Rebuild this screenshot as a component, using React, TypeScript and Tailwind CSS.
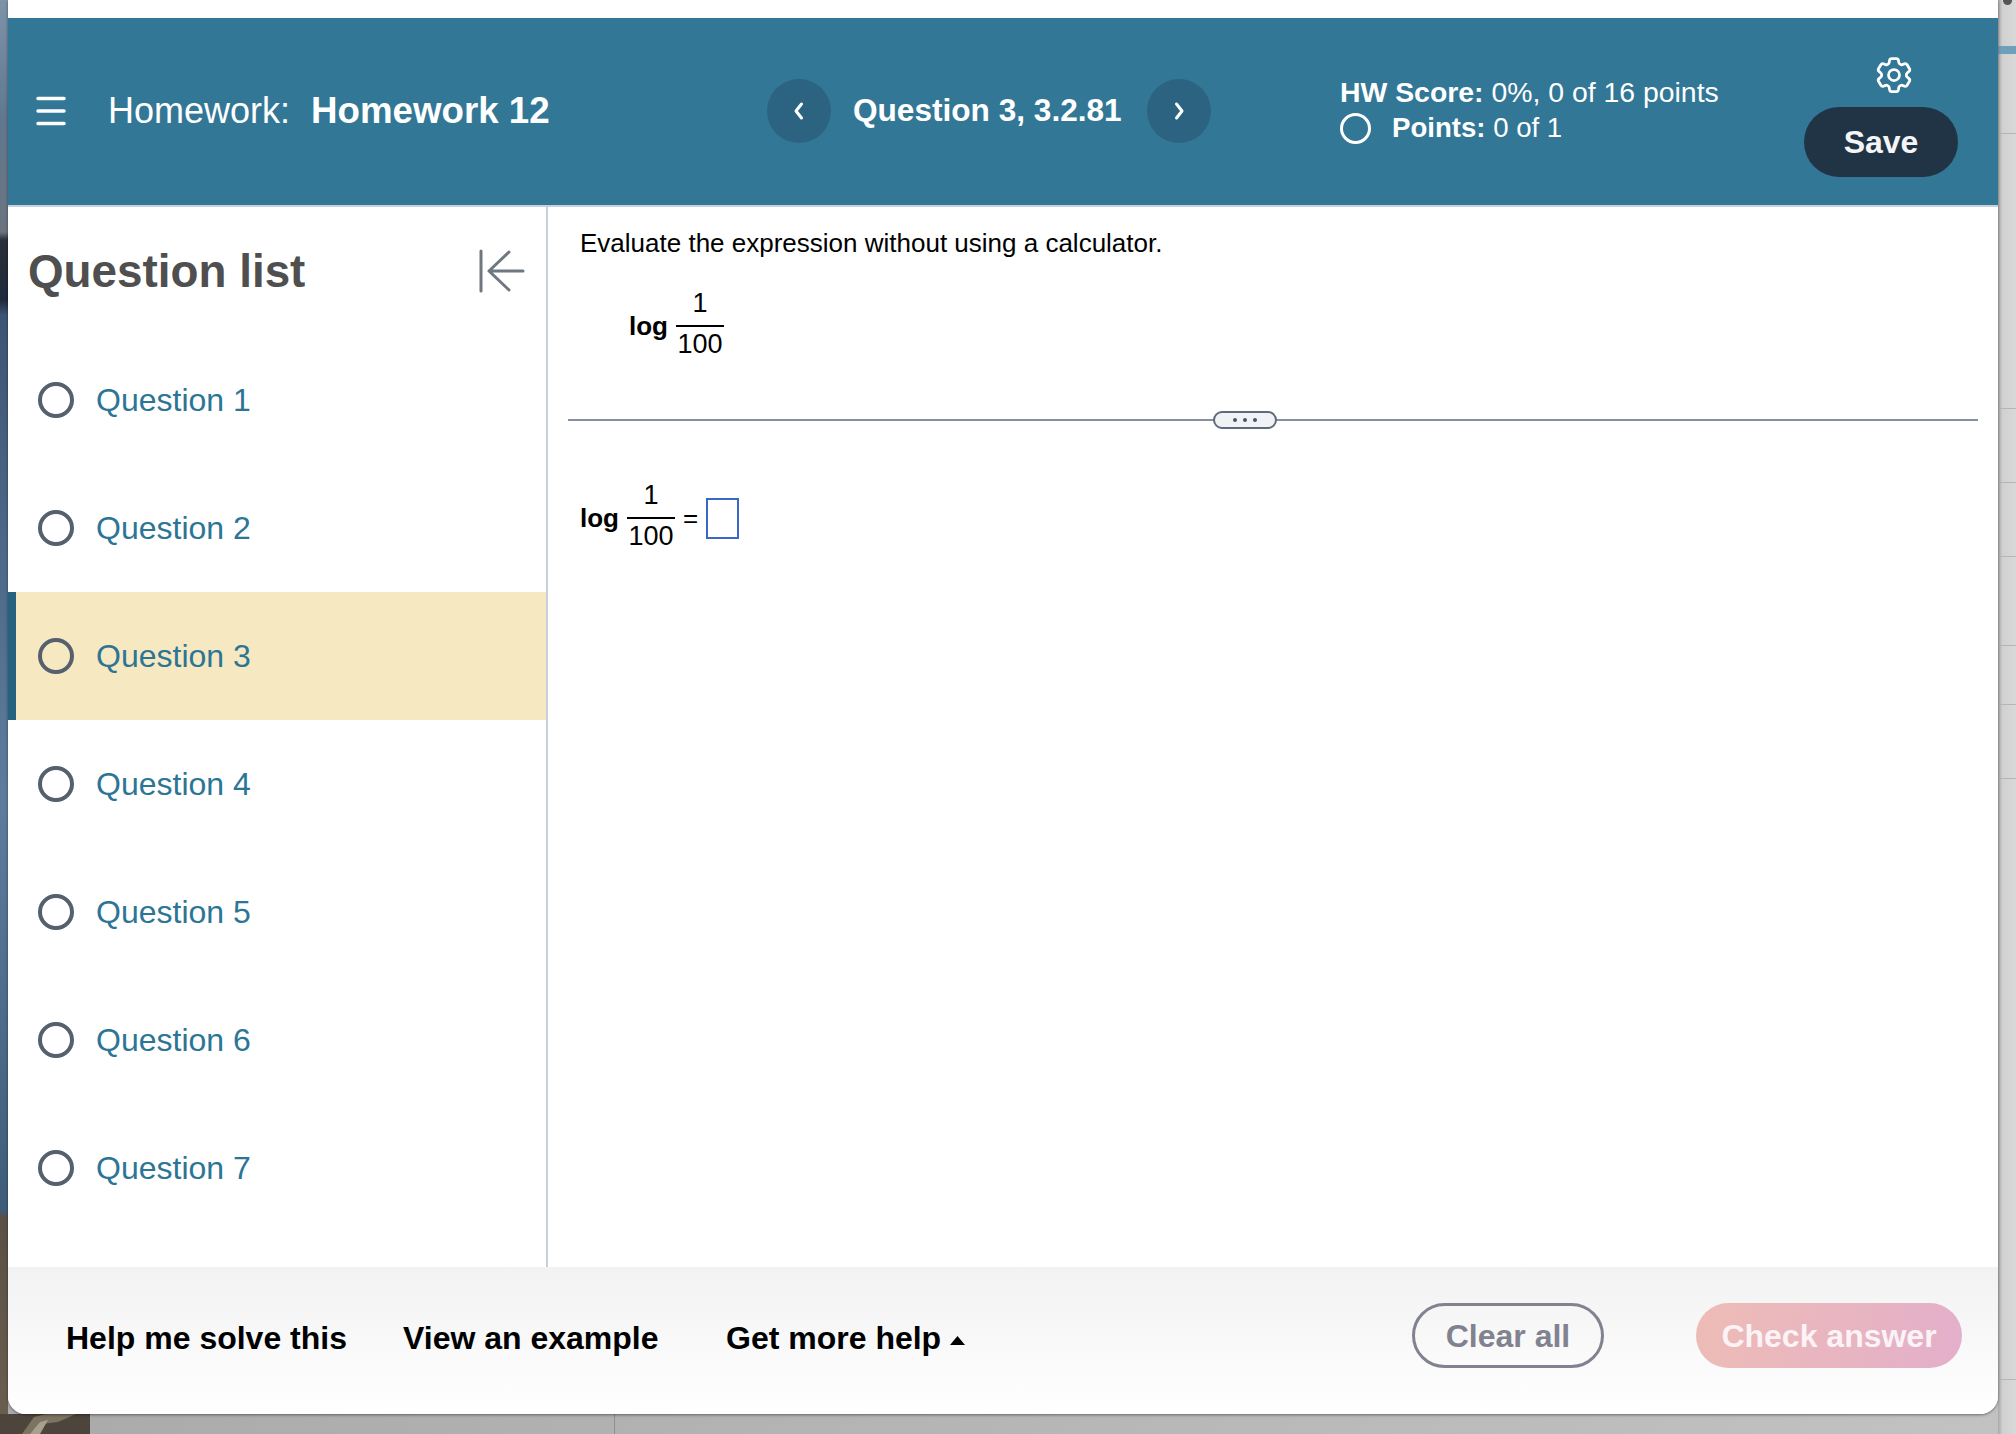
import React from "react";
import { HiOutlineCog6Tooth } from "react-icons/hi2";

const font = { fontFamily: '"Liberation Sans", Arial, sans-serif' };

function Circle({ className }: { className: string }) {
  return <span className={className} />;
}

function Fraction() {
  return (
    <span className="inline-flex w-[48px] flex-col items-center">
      <span className="h-[44px] text-[27px] leading-[44px]">1</span>
      <span className="h-[2px] w-full bg-black" />
      <span className="h-[36px] text-[27px] leading-[34px]">100</span>
    </span>
  );
}

const questions = [1, 2, 3, 4, 5, 6, 7];

export default function App() {
  return (
    <div style={font} className="relative h-[1434px] w-[2016px] overflow-hidden bg-[linear-gradient(90deg,#aaaaaa,#c2c2c2)]">
      <div className="absolute left-0 top-0 h-full w-[8px] bg-[linear-gradient(180deg,#7d93a8_0px,#5f7890_120px,#6a7480_232px,#2a2f38_240px,#1f2a3d_300px,#3d5575_315px,#5e7d9e_800px,#3e5c7a_1210px,#5a5045_1218px,#6b5f50_1434px)]" />
      <svg className="absolute bottom-0 left-0" width="90" height="20" viewBox="0 0 90 20">
        <rect width="90" height="20" fill="#4d453c" />
        <path d="M22 20 34 3l12-3 30 0-18 8-16 2-12 10z" fill="#7d7362" />
        <path d="M30 20 40 8l8-2-8 14z" fill="#a89f8d" />
      </svg>
      <div className="absolute bottom-0 left-[614px] h-[20px] w-[1px] bg-[#8f8f8f]" />
      <div className="absolute right-0 top-0 h-full w-[18px] bg-[linear-gradient(90deg,#a8a8a8,#d0d0d0_25%,#d9d9d9)]" />
      <div className="absolute right-[4px] top-0 h-[5px] w-[9px] rounded-b-full bg-[#555555]" />
      <div className="absolute right-0 top-[46px] h-[8px] w-[18px] bg-[#6f9fbb]" />
      <div className="absolute right-0 top-[133px] h-[1px] w-[18px] bg-[#b5b5b5]" />
      <div className="absolute right-0 top-[408px] h-[1px] w-[18px] bg-[#b5b5b5]" />
      <div className="absolute right-0 top-[482px] h-[1px] w-[18px] bg-[#b5b5b5]" />
      <div className="absolute right-0 top-[556px] h-[1px] w-[18px] bg-[#b5b5b5]" />
      <div className="absolute right-0 top-[645px] h-[1px] w-[18px] bg-[#b5b5b5]" />
      <div className="absolute right-0 top-[704px] h-[1px] w-[18px] bg-[#b5b5b5]" />
      <div className="absolute right-0 top-[778px] h-[1px] w-[18px] bg-[#b5b5b5]" />
      <div className="absolute right-0 top-[1379px] h-[1px] w-[18px] bg-[#b5b5b5]" />

      <div className="relative ml-[8px] flex h-[1414px] w-[1990px] flex-col overflow-hidden rounded-b-[18px] bg-white pt-[18px] shadow-[0_1px_3px_rgba(0,0,0,0.45)]">
        <header className="flex h-[189px] shrink-0 items-center border-b-2 border-[#c8d0e0] bg-[#327796] pb-[2px] text-white">
          <svg className="ml-[28px] w-[30px] shrink-0" height="30" viewBox="0 0 30 30" fill="none" stroke="white" strokeWidth="3.5" strokeLinecap="round">
            <path d="M2 2.5h26M2 15h26M2 27.5h26" />
          </svg>
          <div className="ml-[42px] w-[481px] shrink-0 whitespace-nowrap text-[36px]">
            Homework:<span className="ml-[21px] text-[36.7px] font-bold">Homework 12</span>
          </div>
          <button className="ml-[178px] flex h-[64px] w-[64px] shrink-0 items-center justify-center rounded-full bg-[#2c6381]">
            <svg width="16" height="20" viewBox="0 0 16 20" fill="none" stroke="white" strokeWidth="3" strokeLinecap="round" strokeLinejoin="round"><path d="M10.5 3 5 10l5.5 7" /></svg>
          </button>
          <div className="ml-[22px] w-[272px] shrink-0 whitespace-nowrap text-[31.6px] font-bold">Question 3, 3.2.81</div>
          <button className="ml-[22px] flex h-[64px] w-[64px] shrink-0 items-center justify-center rounded-full bg-[#2c6381]">
            <svg width="16" height="20" viewBox="0 0 16 20" fill="none" stroke="white" strokeWidth="3" strokeLinecap="round" strokeLinejoin="round"><path d="M5.5 3 11 10l-5.5 7" /></svg>
          </button>
          <div className="ml-[129px] w-[464px] shrink-0 text-[28.4px] leading-[36px]">
            <div className="-mt-[1px] whitespace-nowrap"><b>HW Score:</b> 0%, 0 of 16 points</div>
            <div className="flex items-center whitespace-nowrap text-[27.6px]">
              <Circle className="mr-[21px] block h-[31px] w-[31px] rounded-full border-[3.5px] border-white" />
              <span><b>Points:</b> 0 of 1</span>
            </div>
          </div>
          <div className="flex w-[154px] shrink-0 flex-col items-center">
            <HiOutlineCog6Tooth className="relative left-[13px] top-[9px] mb-[19px] h-[44px] w-[44px] text-white" />
            <button className="h-[70px] w-[154px] rounded-full bg-[#203445] text-[32px] font-bold text-[#f5f5f8]">Save</button>
          </div>
        </header>

        <div className="flex min-h-0 flex-1">
          <aside className="w-[540px] shrink-0 border-r-2 border-[#c8d0e0]">
            <div className="flex h-[129px] items-center justify-between pl-[20px] pr-[21px]">
              <h2 className="mt-[2px] text-[45.8px] font-bold text-[#4f4f4f]">Question list</h2>
              <svg className="mb-[2px]" width="48" height="46" viewBox="0 0 48 46" fill="none" stroke="#6f7780" strokeWidth="3" strokeLinecap="round" strokeLinejoin="round">
                <path d="M4 3v40M46 23H12M32 4 12 23l20 19" />
              </svg>
            </div>
            {questions.map((q) => (
              <div key={q} className={q === 3 ? "flex h-[128px] items-center border-l-8 border-[#24627f] bg-[#f6e9c1] pl-[22px]" : "flex h-[128px] items-center pl-[30px]"}>
                <Circle className="block h-[36px] w-[36px] shrink-0 rounded-full border-4 border-[#555f6d]" />
                <span className="ml-[22px] text-[32px] text-[#2d7595]">Question {q}</span>
              </div>
            ))}
          </aside>

          <main className="min-w-0 flex-1 text-black">
            <p className="ml-[32px] mt-[18px] text-[26px] leading-[36px]">Evaluate the expression without using a calculator.</p>
            <div className="ml-[81px] mt-[20px] flex items-center">
              <b className="mr-[8px] mt-[9px] text-[26px]">log</b>
              <Fraction />
            </div>
            <div className="relative ml-[20px] mr-[20px] mt-[56px] h-[2px] bg-[#8591a3]">
              <div className="absolute left-[645px] top-[-8px] flex h-[18px] w-[64px] items-center justify-center gap-[6px] rounded-full border-2 border-[#5f6b7c] bg-[#f0f2f5]">
                <i className="h-[4px] w-[4px] rounded-full bg-[#4b5563]" />
                <i className="h-[4px] w-[4px] rounded-full bg-[#4b5563]" />
                <i className="h-[4px] w-[4px] rounded-full bg-[#4b5563]" />
              </div>
            </div>
            <div className="ml-[32px] mt-[52px] flex items-center">
              <b className="mr-[8px] mt-[9px] text-[26px]">log</b>
              <Fraction />
              <span className="ml-[8px] mt-[8px] text-[26px]">=</span>
              <span className="ml-[8px] mt-[8px] h-[41px] w-[33px] border-2 border-[#3a68c8]" />
            </div>
          </main>
        </div>

        <footer className="flex h-[147px] shrink-0 items-center bg-[linear-gradient(180deg,#f2f2f2,#ffffff)] pb-[5px] text-[32px] font-bold">
          <span className="ml-[58px] w-[279px] whitespace-nowrap text-black">Help me solve this</span>
          <span className="ml-[58px] w-[257px] whitespace-nowrap text-black">View an example</span>
          <span className="ml-[66px] w-[215px] whitespace-nowrap text-black">Get more help</span>
          <svg className="ml-[9px] mt-[5px]" width="15" height="9" viewBox="0 0 15 9"><path d="M7.5 0 15 9H0z" fill="#000" /></svg>
          <button className="mb-[5px] ml-[447px] h-[65px] w-[192px] rounded-full border-[3.5px] border-[#80838f] text-[#80838f]">Clear all</button>
          <button className="mb-[5px] ml-[92px] h-[65px] w-[266px] rounded-full bg-[linear-gradient(105deg,#eebcb5,#e3afcb)] text-[#fbf3f6]">Check answer</button>
        </footer>
      </div>
    </div>
  );
}
